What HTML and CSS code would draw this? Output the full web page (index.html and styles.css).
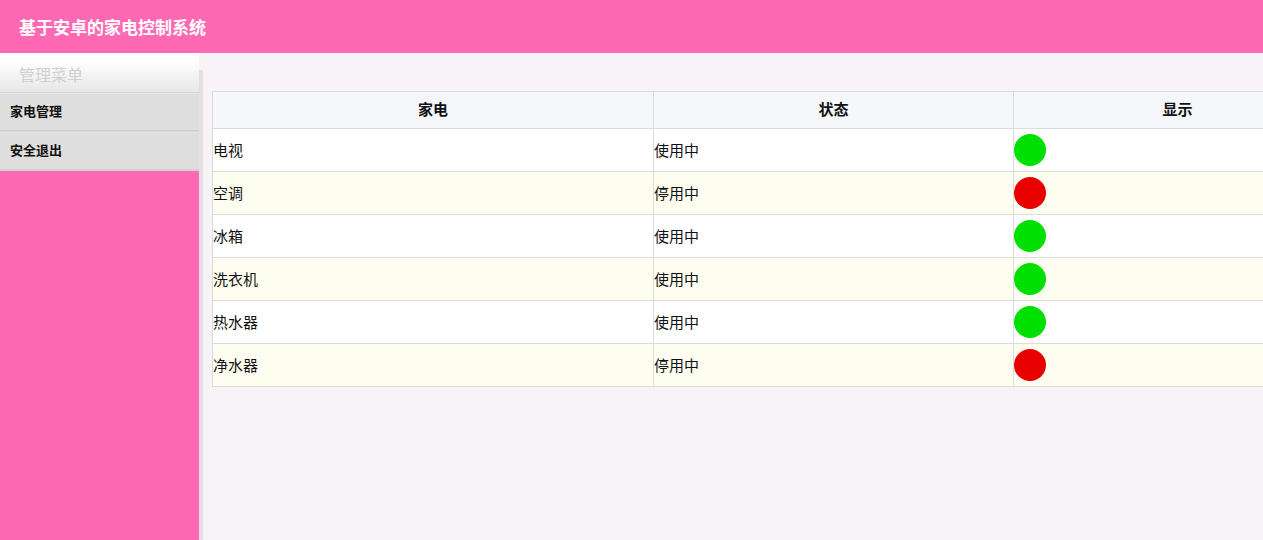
FILE: index.html
```html
<!DOCTYPE html>
<html lang="zh-CN">
<head>
    <meta charset="UTF-8">
    <title>基于安卓的家电控制系统</title>
    <link rel="stylesheet" href="styles.css">
</head>
<body>
    <!-- 顶部标题 -->
    <div class="header">
        <span class="header-title">基于安卓的家电控制系统</span>
    </div>

    <div class="layout">
        <!-- 左侧菜单 -->
        <div class="sidebar">
            <div class="menu-title">管理菜单</div>
            <ul class="menu">
                <li><a href="#">家电管理</a></li>
                <li><a href="#">安全退出</a></li>
            </ul>
        </div>

        <!-- 内容区 -->
        <div class="main">
            <table class="devices">
                <colgroup>
                    <col class="col-name">
                    <col class="col-state">
                    <col class="col-light">
                </colgroup>
                <thead>
                    <tr><th>家电</th><th>状态</th><th>显示</th></tr>
                </thead>
                <tbody>
                    <tr><td>电视</td><td>使用中</td><td><span class="dot on"></span></td></tr>
                    <tr><td>空调</td><td>停用中</td><td><span class="dot off"></span></td></tr>
                    <tr><td>冰箱</td><td>使用中</td><td><span class="dot on"></span></td></tr>
                    <tr><td>洗衣机</td><td>使用中</td><td><span class="dot on"></span></td></tr>
                    <tr><td>热水器</td><td>使用中</td><td><span class="dot on"></span></td></tr>
                    <tr><td>净水器</td><td>停用中</td><td><span class="dot off"></span></td></tr>
                </tbody>
            </table>
        </div>
    </div>
</body>
</html>
```

FILE: styles.css
```css
/* 通用 */
html, body {
    height: 100%;
}

body {
    margin: 0;
    font-family: "Noto Sans CJK SC", "Noto Sans", sans-serif;
    background-color: #f7f3f7;
    overflow: hidden;
    display: flex;
    flex-direction: column;
}

/* 顶部 */
.header {
    height: 53px;
    flex-shrink: 0;
    background-color: #ff69b4;
    display: flex;
    align-items: center;
    padding-left: 19px;
}

.header-title {
    color: #fff;
    font-family: "Liberation Serif", "Noto Sans CJK SC", serif;
    font-size: 17px;
    font-weight: 700;
}

.layout {
    flex: 1;
    display: flex;
    min-height: 0;
}

/* 左侧菜单 */
.sidebar {
    width: 199px;
    flex-shrink: 0;
    background-color: #ff69b4;
    position: relative;
}

.sidebar::after {
    content: "";
    position: absolute;
    top: 17px;
    right: -4px;
    bottom: 0;
    width: 4px;
    background-color: #e3dfe3;
}

.menu-title {
    height: 39px;
    line-height: 42px;
    padding-left: 19px;
    font-size: 16px;
    color: #d0d0d0;
    background: linear-gradient(#ffffff 20%, #e6e6e6);
    border-bottom: 1px solid #d8d8d8;
}

.menu {
    list-style: none;
    margin: 0;
    padding: 0;
}

.menu li {
    background-color: #dedede;
    border-bottom: 2px solid #d2d2d2;
    border-top: 1px solid #e6e6e6;
}

.menu a {
    display: block;
    height: 36px;
    line-height: 34px;
    padding-left: 10px;
    font-size: 13px;
    font-weight: 700;
    color: #111;
    text-decoration: none;
}

/* 内容区 */
.main {
    flex: 1;
    min-width: 0;
    overflow: hidden;
    padding: 38px 0 0 13px;
}

.devices {
    width: 1129px;
    border-collapse: collapse;
    table-layout: fixed;
    font-size: 15px;
    color: #111;
}

.col-name { width: 441px; }
.col-state { width: 360px; }
.col-light { width: 328px; }

.devices th {
    height: 33px;
    padding: 0 0 3px;
    background-color: #f6f7fb;
    border: 1px solid #dcdcdc;
    font-weight: 700;
    text-align: center;
}

.devices td {
    height: 40px;
    padding: 0 0 2px;
    border: 1px solid #dcdcdc;
    text-align: left;
    vertical-align: middle;
}

.devices tbody tr {
    background-color: #fff;
}

.devices tbody tr:nth-child(even) {
    background-color: #fefef0;
}

/* 状态指示灯 */
.dot {
    display: block;
    width: 32px;
    height: 32px;
    border-radius: 50%;
    margin-top: 2px;
}

.dot.on { background-color: #00e000; }
.dot.off { background-color: #e80000; }
```
